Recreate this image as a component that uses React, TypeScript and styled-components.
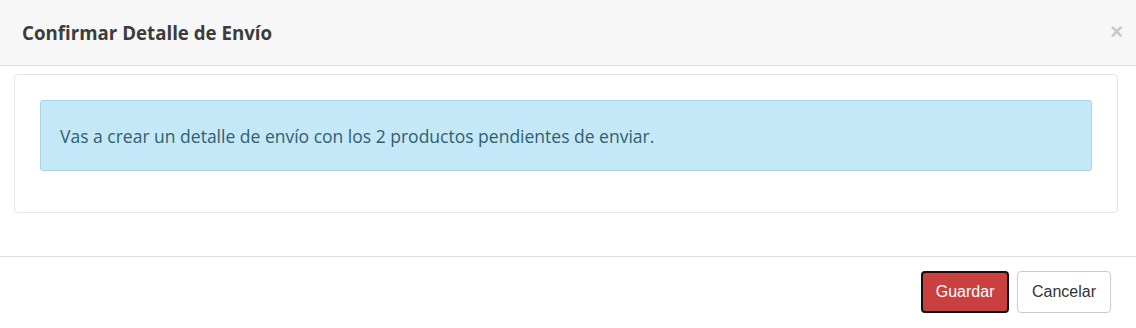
import React from "react";
import styled, { createGlobalStyle } from "styled-components";

const Global = createGlobalStyle`
  html, body { margin: 0; padding: 0; background: #fff; }
  body { width: 1136px; height: 328px; overflow: hidden; font-family: "Open Sans", sans-serif; }
`;

const Modal = styled.div`
  width: 1136px;
  height: 328px;
  display: flex;
  flex-direction: column;
  background: #fff;
`;

const Header = styled.div`
  height: 66px;
  box-sizing: border-box;
  background: #f7f7f7;
  border-bottom: 1px solid #dddddd;
  display: flex;
  align-items: center;
  justify-content: space-between;
  padding: 0 13px 0 22px;
`;

const Title = styled.h4`
  margin: 0;
  font-family: "Open Sans", sans-serif;
  font-weight: 700;
  font-size: 18.7px;
  color: #3c3c3c;
  padding-bottom: 1px;
`;

const Close = styled.button`
  border: none;
  background: none;
  padding: 0;
  margin-bottom: 2px;
  font-family: "Liberation Sans", Arial, sans-serif;
  font-size: 22px;
  font-weight: 700;
  color: #c8c8c8;
  line-height: 1;
  cursor: pointer;
`;

const Body = styled.div`
  padding: 8px 18px 43px 14px;
`;

const Card = styled.div`
  border: 1px solid #e6e6e6;
  border-radius: 4px;
  padding: 25px 25px 41px 25px;
`;

const Alert = styled.div`
  background: #c4e8f7;
  border: 1px solid #a8d3eb;
  border-radius: 3px;
  height: 71px;
  box-sizing: border-box;
  display: flex;
  align-items: center;
  padding: 0 19px;
  font-family: "Open Sans", sans-serif;
  font-size: 17.5px;
  color: #31606f;
`;

const Footer = styled.div`
  border-top: 1px solid #dddddd;
  display: flex;
  justify-content: flex-end;
  gap: 8px;
  padding: 14px 25px 0 0;
`;

const Button = styled.button<{ $primary?: boolean }>`
  height: 42px;
  box-sizing: border-box;
  font-family: "Liberation Sans", Arial, sans-serif;
  font-size: 16px;
  border-radius: 4px;
  padding: 0 ${(p) => (p.$primary ? "12.5px" : "14px")};
  background: ${(p) => (p.$primary ? "#c9403f" : "#ffffff")};
  color: ${(p) => (p.$primary ? "#ffffff" : "#333333")};
  border: ${(p) => (p.$primary ? "2px solid #111111" : "1px solid #cccccc")};
  cursor: pointer;
`;

export default function App() {
  return (
    <>
      <Global />
      <Modal>
        <Header>
          <Title>Confirmar Detalle de Envío</Title>
          <Close aria-label="Cerrar">×</Close>
        </Header>
        <Body>
          <Card>
            <Alert>Vas a crear un detalle de envío con los 2 productos pendientes de enviar.</Alert>
          </Card>
        </Body>
        <Footer>
          <Button $primary>Guardar</Button>
          <Button>Cancelar</Button>
        </Footer>
      </Modal>
    </>
  );
}
